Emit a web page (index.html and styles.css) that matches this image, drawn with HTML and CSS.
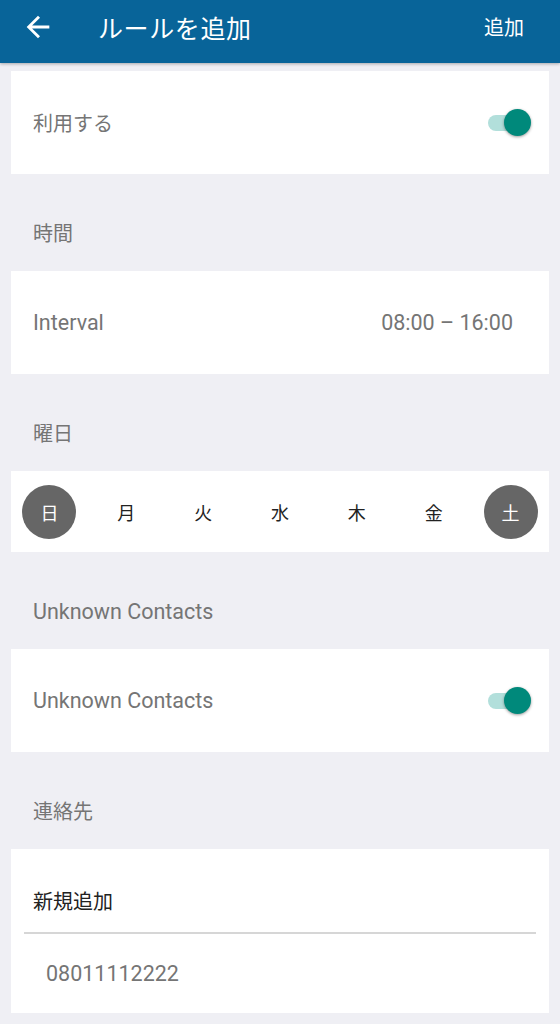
FILE: index.html
```html
<!DOCTYPE html>
<html lang="ja">
<head>
    <meta charset="utf-8">
    <title>ルールを追加</title>
    <link rel="stylesheet" href="styles.css">
</head>
<body>
    <header class="app-bar">
        <svg class="back" width="34" height="34" viewBox="0 0 24 24">
            <path d="M20 11H7.83l5.59-5.59L12 4l-8 8 8 8 1.41-1.41L7.83 13H20v-2z" fill="#fff"/>
        </svg>
        <h1 class="title">ルールを追加</h1>
        <span class="action">追加</span>
    </header>

    <main class="content">
        <div class="card row first">
            <span class="label">利用する</span>
            <span class="switch on"><span class="thumb"></span></span>
        </div>

        <div class="section-title">時間</div>
        <div class="card row">
            <span class="label latin">Interval</span>
            <span class="value latin">08:00 – 16:00</span>
        </div>

        <div class="section-title">曜日</div>
        <div class="card days">
            <span class="day selected">日</span>
            <span class="day">月</span>
            <span class="day">火</span>
            <span class="day">水</span>
            <span class="day">木</span>
            <span class="day">金</span>
            <span class="day selected">土</span>
        </div>

        <div class="section-title latin">Unknown Contacts</div>
        <div class="card row">
            <span class="label latin">Unknown Contacts</span>
            <span class="switch on"><span class="thumb"></span></span>
        </div>

        <div class="section-title">連絡先</div>
        <div class="card contacts">
            <div class="add-new">新規追加</div>
            <div class="contact latin">08011112222</div>
        </div>
    </main>
</body>
</html>
```

FILE: styles.css
```css
body {
    margin: 0;
    padding: 0;
    background-color: #efeff4;
    font-family: Roboto, "Noto Sans CJK JP", sans-serif;
    color: #757575;
}
.app-bar {
    height: 63px;
    box-sizing: border-box;
    background-color: #086499;
    display: flex;
    align-items: center;
    padding: 0 36px 10px 21px;
    box-shadow: 0 1px 3px rgba(0, 0, 0, 0.3);
    position: relative;
}
.back {
    width: 34px;
    height: 34px;
}
.title {
    flex: 1;
    margin: 0 0 0 43px;
    color: #ffffff;
    font-size: 25px;
    font-weight: normal;
    letter-spacing: 0.6px;
}
.action {
    color: #ffffff;
    font-size: 20px;
}
.content {
    padding: 8px 11px 12px;
}
.card {
    background-color: #ffffff;
}
.row {
    height: 103px;
    display: flex;
    align-items: center;
    justify-content: space-between;
    padding: 0 19px 0 22px;
    font-size: 20px;
}
.latin {
    font-size: 21.5px;
}
.value {
    margin-right: 17px;
}
.section-title {
    height: 97px;
    box-sizing: border-box;
    line-height: 20px;
    font-size: 20px;
    padding: 50px 0 0 22px;
}
.section-title.latin {
    font-size: 21.5px;
}
.switch {
    width: 42px;
    height: 16px;
    border-radius: 8px;
    background-color: #b2dfdb;
    position: relative;
}
.switch .thumb {
    position: absolute;
    right: -1px;
    top: -6px;
    width: 27px;
    height: 27px;
    border-radius: 50%;
    background-color: #00897b;
    box-shadow: 0 1px 3px rgba(0, 0, 0, 0.4);
}
.days {
    height: 81px;
    display: grid;
    grid-template-columns: repeat(7, 1fr);
    align-items: center;
    justify-items: center;
}
.day {
    width: 54px;
    height: 54px;
    border-radius: 50%;
    display: flex;
    align-items: center;
    justify-content: center;
    font-size: 18px;
    color: #222222;
}
.day.selected {
    background-color: #666666;
    color: #ffffff;
}
.contacts {
    height: 164px;
    padding: 0 13px;
    box-sizing: border-box;
}
.add-new {
    height: 85px;
    box-sizing: border-box;
    padding: 43px 0 0 9px;
    line-height: 20px;
    font-size: 20px;
    color: #222222;
    border-bottom: 2px solid #d6d6d6;
}
.contact {
    height: 78px;
    display: flex;
    align-items: center;
    padding-left: 22px;
}
```
